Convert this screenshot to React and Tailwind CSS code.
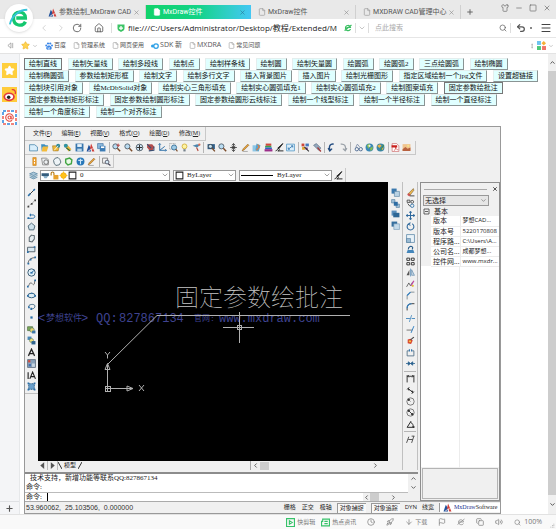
import React, { useState } from 'react';
import {
  X, Plus, Minus, Square, Shirt, ChevronLeft, ChevronRight, ChevronDown, ChevronUp, RotateCw, House,
  Search, Undo2, Menu, File, Rocket, ArrowDown, Flag, Volume2, Copy, Clock, Star, EllipsisVertical, AtSign,
} from 'lucide-react';

const BUTTON_ROWS = [
  ['绘制直线', '绘制矢量线', '绘制多段线', '绘制点', '绘制样条线', '绘制圆', '绘制矢量圆', '绘圆弧', '绘圆弧2', '三点绘圆弧', '绘制椭圆'],
  ['绘制椭圆弧', '参数绘制矩形框', '绘制文字', '绘制多行文字', '插入背景图片', '插入图片', '绘制光栅图形', '指定区域绘制一个jpg文件', '设置超链接'],
  ['绘制块引用对象', '绘McDbSolid对象', '绘制实心三角形填充', '绘制实心圆弧填充1', '绘制实心圆弧填充2', '绘制图案填充', '固定参数绘批注'],
  ['固定参数绘制矩形标注', '固定参数绘制圆形标注', '固定参数绘圆形云线标注', '绘制一个线型标注', '绘制一个半径标注', '绘制一个直径标注'],
  ['绘制一个角度标注', '绘制一个对齐标注'],
];

const MENUS = ['文件(F)', '编辑(E)', '视图(V)', '格式(O)', '绘图(D)', '修改(M)'];

const PROPERTIES = [
  ['版本', '梦想CAD...'],
  ['版本号', '5220170808'],
  ['程序路...', 'C:\\Users\\A...'],
  ['公司名...', '成都梦想...'],
  ['控件网...', 'www.mxdr...'],
];

const lens = (
  <>
    <circle cx="6" cy="6" r="4.5" fill="#b9dcf2" stroke="#55616b" strokeWidth="1.6" />
    <path d="M9.5 9.5l5 5" stroke="#7a4b2a" strokeWidth="2.6" />
  </>
);
const blue = '#2b6fa8';
const dark = '#333';

// 16x16 toolbar glyphs
const GLYPHS = {
  new: <path d="M1 3h9l5 4v7H1z" fill="#d9eefb" stroke="#4a86ac" strokeWidth="1.4" />,
  open: <><path d="M2 2h6l2 2h4v3H5L3 15z" fill="#3b8ec2" /><path d="M5 6h10l-3 9H3z" fill="#f3bb3c" /></>,
  openWeb: <><path d="M1 5h12l-2 9H2z" fill="#efb93b" stroke="#9c7420" /><circle cx="11" cy="5" r="3.5" fill="#2e8b9c" /><path d="M4 13l7-8" stroke="#fff" strokeWidth="1.5" /></>,
  saveWeb: <><path d="M1 3l6-1 8 9-5 4z" fill="#e8b43c" /><circle cx="5" cy="5" r="3.5" fill="#2f93a6" /><path d="M6 9l7 5" stroke="#2d6b35" strokeWidth="2" /></>,
  save: <><path d="M1 1h14v14H1z" fill="#3775ad" /><path d="M4 2h8v5H4z" fill="#e9f3fa" /><path d="M4 10h8v5H4z" fill="#b8d4e9" /></>,
  logo: <><path d="M1 15L5 3l3 5 1 7z" fill="#21529b" /><path d="M6 15l3-14 6 14h-4l-2-6z" fill="#d1403b" /><path d="M4 14l8-4" stroke="#fff" strokeWidth="1.3" /></>,
  saveAs: <><path d="M1 1h10v9H1z" fill="#8db9dc" stroke="#2d649a" /><path d="M5 5h10v10H5z" fill="#3c7cb5" /><path d="M7 6h6v3H7z" fill="#fff" /></>,
  zoomIn: <>{lens}<path d="M11 1v6M8 4h6" stroke="#b44" strokeWidth="1.6" /></>,
  zoom: lens,
  zoomAll: <><circle cx="8" cy="8" r="6" fill="#cfe5f4" stroke="#55616b" strokeWidth="1.6" /><path d="M8 3v10M3 8h10" stroke={dark} strokeWidth="1.8" fill="none" /></>,
  pan: <><path d="M2 2h9l4 5-3 6-5 1-5-6z" fill="#b34c4c" /><path d="M2 2l7 7M5 14l9-1v-7" stroke="#3b4f73" strokeWidth="2" fill="none" /></>,
  axis: <path d="M3 1v12h12M3 13l9-7M1 3l2-2 2 2M13 11l2 2-2 2" fill="none" stroke="#3171a9" strokeWidth="1.7" />,
  zoomWin: <><path d="M1 1h10v10H1z" fill="none" stroke="#888" strokeDasharray="2 1" /><circle cx="9" cy="8" r="4.5" fill="#9fcbe6" stroke="#2f6b95" strokeWidth="1.5" /><path d="M12 11l3 4" stroke="#7a4b2a" strokeWidth="2" /></>,
  bulb: <><circle cx="8" cy="6" r="4.3" fill="#fdf3a1" stroke="#cda522" strokeWidth="1.3" /><path d="M6 11h4v4H6z" fill="#76828c" /></>,
  brush: <><path d="M1 5l8-3 6 1-6 5z" fill="#4d87ae" /><path d="M8 8l3 6" stroke="#b2473a" strokeWidth="2" /><circle cx="13" cy="3" r="2" fill="#de6a52" /></>,
  zoomDark: <><path d="M1 2h13v9H1z" fill="#315f88" /><circle cx="6" cy="6" r="3.5" fill="#c7e3f3" stroke="#222" /><path d="M9 9l5 6" stroke="#7a4b2a" strokeWidth="2.4" /></>,
  move4: <path d="M8 1v14M2 8h12M5 4l3-3 3 3M5 12l3 3 3-3M6 5v6M10 5v6" fill="none" stroke={dark} strokeWidth="1.4" />,
  pencil: <><path d="M2 14l2-4 8-8 2 2-8 8z" fill="#e7a33a" stroke="#8a5b1d" /><path d="M3 15h9" stroke="#777" /></>,
  palette: <><path d="M1 4h10v11H1z" fill="#8cc6e6" /><path d="M8 1l7 3-3 11-6-2z" fill="#59a5cf" /><path d="M10 3l3 4-5 6" stroke="#e47b3c" strokeWidth="2" fill="none" /></>,
  colors: <><path d="M3 1h10v4H3z" fill="#d0483c" /><path d="M2 5h11v3H2z" fill="#3ca04d" /><path d="M2 8h12v3H2z" fill="#345fc0" /><path d="M1 11h14v4H1z" fill="#9c2e8a" /></>,
  pen: <><path d="M14 1L7 10l-2-1z" fill="#222" stroke="#222" strokeWidth="1.6" /><path d="M1 14c3 0 3-4 5-4l2 2c-1 2-3 2-3 2h10" stroke="#222" fill="none" strokeWidth="1.7" /></>,
  fit: <><path d="M1 2h14v12H1z" fill="#dbeefa" stroke="#5c9cc7" strokeWidth="1.5" /><path d="M4 11l8-6M9 5h3v3M4 8v3h3" stroke={blue} fill="none" strokeWidth="1.4" /></>,
  blocks: <><path d="M1 1h5v5H1z" fill="#cf4639" /><path d="M8 1h6v5H8z" fill="#4677bd" /><path d="M2 7h5v5H2z" fill="#e1a431" /><path d="M8 8h4v4H8z" fill="#7c3d95" /><path d="M6 7l8 8" stroke="#333" strokeWidth="2" /></>,
  search2: <><path d="M1 4l5-3 8 8-4 4z" fill="#93a8bd" stroke="#4c5e75" /><path d="M8 8l6 7" stroke="#a43b3b" strokeWidth="2.4" /></>,
  undo: <path d="M12 2C6 1 3 5 5 12M2 9l3 5 4-4" fill="none" stroke="#234c80" strokeWidth="2.5" />,
  redo: <path d="M3 2c7-1 10 4 8 10M7 10l4 4 3-5" fill="none" stroke="#9aa1a8" strokeWidth="2.2" />,
  find: <><circle cx="5" cy="11" r="3" fill="none" stroke="#405f8a" strokeWidth="1.5" /><circle cx="12" cy="11" r="3" fill="none" stroke="#405f8a" strokeWidth="1.5" /><path d="M3 8l3-6 4 5" stroke="#7a8ba5" fill="none" strokeWidth="1.5" /></>,
  globe: <><circle cx="8" cy="8" r="7" fill="#3a88b5" /><path d="M3 4l5-3 1 5-3 4zM9 9l5-3-1 6-3 2z" fill="#8bc04f" /><circle cx="8" cy="5" r="2" fill="#eee" /></>,
  globe2: <><circle cx="8" cy="8" r="7" fill="#3a86a8" /><path d="M2 5l5-3 3 3-4 4zM9 9l5-1-3 5z" fill="#e9b548" /><path d="M8 13l6-10" stroke="#3f8f52" strokeWidth="2" /></>,
  pdf: <><path d="M2 1h8l4 4v10H2z" fill="#fff" stroke="#c66" strokeWidth="1.2" /><path d="M1 4h10v4H1z" fill="#c8201c" /><path d="M5 14c3-2 4-5 3-7 0 4 3 5 5 5" stroke="#c8201c" fill="none" /></>,
  image: <><path d="M1 2h14v12H1z" fill="#f0c48e" /><path d="M1 11l5-4 4 3 5-2v6H1z" fill="#b8613f" /><circle cx="11" cy="5" r="2" fill="#f5e38a" /></>,
  door: <><path d="M5 1h6v14H5z" fill="#f0a12c" stroke="#c37a13" /><path d="M7 4h2v3H7zM7 9h2v3H7z" fill="#fff" /></>,
  copyShape: <><path d="M1 2h9l3 3v9H3z" fill="#eef1f3" stroke="#777" strokeWidth="1.3" /><circle cx="9" cy="9" r="4" fill="none" stroke="#666" strokeWidth="1.5" /></>,
  cloud: <path d="M4 2l5-1 3 3 2 5-3 5-6 1-3-4-1-5z" fill="#eef4f7" stroke="#48606b" strokeWidth="1.5" />,
  poly: <path d="M3 4l7-2 4 3-1 7-6 2-4-4z" fill="#eaf8e6" stroke="#42a544" strokeWidth="2.5" />,
  info: <><circle cx="8" cy="8" r="7" fill="#2777b8" /><path d="M8 3v10M4 6h8" stroke="#cde5f6" strokeWidth="2" /></>,
  zoomDoc: <><path d="M1 2h9v9H1z" fill="#f4f4f4" stroke="#666" strokeWidth="1.3" /><circle cx="9" cy="9" r="3.4" fill="#d6eaf6" stroke="#445" strokeWidth="1.4" /><path d="M11 12l4 3" stroke="#445" strokeWidth="2" /></>,
  layers: <path d="M1 5l7-3 7 3-7 3zM1 8l7 3 7-3M1 11l7 3 7-3" fill="#aac7d9" stroke="#5c88a5" strokeWidth="1.4" />,
  eye: <><path d="M1 4h13v5H1z" fill="#345d7e" /><path d="M4 9h9l-3 4H6z" fill="#8ab0c9" /></>,
  lock: <><path d="M2 8V4c0-3 5-3 5 0v3" stroke="#b57a16" strokeWidth="2" fill="none" /><path d="M6 7h9v8H6z" fill="#e7a12c" /></>,
  sun: <><circle cx="8" cy="8" r="5" fill="#ffc21a" stroke="#e99a00" /><path d="M8 1v14M1 8h14" stroke="#ffc21a" strokeWidth="2" /></>,
  box: <path d="M2 2h12v12H2z" fill="#fff" stroke="#222" strokeWidth="1.8" />,
  // drawing tools
  line: <><path d="M2 14L14 2" stroke={dark} strokeWidth="1.7" /><path d="M2 14l4-4M11 5l3-3" stroke={blue} strokeWidth="2.6" /></>,
  ray: <><path d="M1 14L14 3" stroke="#888" strokeWidth="1.3" strokeDasharray="4 1.5" /><path d="M1 12h3v3H1zM7 7h3v3H7zM13 1h3v3h-3z" fill="#444" /></>,
  pline: <><path d="M1 13h9c5 0 5-6 1-6H6" fill="none" stroke={blue} strokeWidth="1.7" /><path d="M1 11h3v3H1zM7 4l-3 3 3 3z" fill={blue} /></>,
  pentagon: <path d="M8 2l6 5-2 7H4L2 7z" fill="#cfe2ec" stroke="#44606f" strokeWidth="1.6" />,
  blob: <path d="M8 2l5 1v6l-4 5-5-1V6z" fill="#e6edf0" stroke="#5d6970" strokeWidth="1.8" />,
  rect: <><path d="M1 4h13v8H1z" fill="#d9e9f2" stroke="#46545e" strokeWidth="1.5" /><path d="M12 2h3v3h-3zM0 11h3v3H0z" fill={blue} /></>,
  arc: <><path d="M2 14C2 7 7 3 14 3" fill="none" stroke="#444" strokeWidth="1.5" /><path d="M1 12h3v3H1zM5 5h3v3H5zM13 1h3v3h-3z" fill={blue} /></>,
  circle: <><circle cx="8" cy="8" r="6.5" fill="#dfeff8" stroke="#36566e" strokeWidth="1.6" /><path d="M8 8l5-4" stroke={blue} strokeWidth="1.6" /><path d="M6 7h4v3H6z" fill={blue} /></>,
  spline: <><path d="M1 13c4 0 2-7 6-6s3 5 6 2l1-7" fill="none" stroke="#555" strokeWidth="1.4" /><path d="M0 12h3v3H0zM13 1h3v3h-3z" fill={blue} /></>,
  ellipse: <><ellipse cx="8" cy="8" rx="6.5" ry="4" fill="#dcecf5" stroke="#33607e" strokeWidth="1.7" /><path d="M0 7h3v3H0zM13 7h3v3h-3zM7 3h3v2H7z" fill={blue} /></>,
  ellipseArc: <><path d="M3 9C1 4 15 2 14 8c0 3-4 5-7 4" fill="none" stroke="#33607e" strokeWidth="1.7" /><path d="M6 10h3v4H6zM2 8h3v3H2z" fill={blue} /></>,
  point: <path d="M6 6h4v4H6z" fill={blue} />,
  insert: <><path d="M1 3h9v7H1z" fill="#7dab5b" stroke="#39592b" /><circle cx="9" cy="9" r="4" fill="#e6d76c" stroke="#466" /><path d="M9 10h6v5H9z" fill="#3d77a8" /></>,
  block: <><path d="M1 1h7v6H1z" fill="#4b87b5" /><circle cx="8" cy="8" r="3.6" fill="#efe07a" stroke="#575" /><path d="M8 9h7v6H8z" fill="#2f648f" /></>,
  textA: <path d="M2.500 14L8 2l5.500 12M4.500 10h7" fill="none" stroke="#222" strokeWidth="2.2" />,
  hatchImg: <><path d="M1 1h14v14H1z" fill="#8aa2ba" stroke="#345" /><path d="M2 2h4v4H2z" fill="#cf4a3c" /><path d="M9 8h5v6H9z" fill="#c9d6e2" /><path d="M3 9h4v4H3z" fill="#3f6db0" /></>,
  textIA: <path d="M2 2v12M5 14l5-12 5 12M7 10h6" fill="none" stroke="#222" strokeWidth="2" />,
  region: <><path d="M3 3h10v10H3z" fill="#6ba0cb" stroke="#275b88" strokeDasharray="2 1" strokeWidth="1.6" /><path d="M1 1h3v3H1zM12 1h3v3h-3zM1 12h3v3H1zM12 12h3v3h-3z" fill={blue} /></>,
  // draw order
  order1: <><path d="M1 1h9v9H1z" fill="#3a78ad" /><path d="M6 6h9v9H6z" fill="#b9d2e4" stroke="#4d7798" /></>,
  order2: <><path d="M1 1h6v6H1zM9 9h6v6H9z" fill="#9fbfd8" stroke="#4d7798" /><path d="M5 5h7v7H5z" fill="#2e6da3" /></>,
  order3: <><path d="M1 1h9v9H1z" fill="#5b8fbc" /><path d="M4 5h11v8H4z" fill="#2e6795" /></>,
  order4: <><path d="M1 1h10v9H1z" fill="#366f9e" /><path d="M5 5h10v10H5z" fill="#c6dbea" stroke="#6b93b3" /></>,
  // modify tools
  erase: <><path d="M13 1L4 10l3 3 7-9z" fill="#edb84b" stroke="#745a2f" /><path d="M2 12l3-3 3 3-2 3z" fill="#c95151" /><path d="M7 14h8" stroke="#333" strokeWidth="1.5" /></>,
  copy: <><path d="M2 2h5v4H2z" fill="#eee" stroke="#444" strokeWidth="1.5" /><circle cx="11" cy="5" r="2.5" fill="none" stroke="#444" strokeWidth="1.5" /><circle cx="11" cy="12" r="3" fill="none" stroke={blue} strokeWidth="1.5" /><path d="M3 8l4 5" stroke="#444" strokeWidth="1.6" /></>,
  move: <path d="M8 1v14M1 8h14M6 3l2-2 2 2M6 13l2 2 2-2M3 6L1 8l2 2M13 6l2 2-2 2" fill="none" stroke="#2f689c" strokeWidth="1.8" />,
  rotate: <path d="M5 3a6 6 0 1 0 6 0M8 1L4 4l4 2" fill="none" stroke="#2f689c" strokeWidth="1.9" />,
  scale: <><path d="M1 1h14v14H1z" fill="#e9f2f8" stroke="#6c93b0" strokeWidth="1.5" /><path d="M1 8h7v7H1z" fill="#9cbcd4" stroke="#4f7a9c" /></>,
  stretch: <><path d="M1 14h14l-2-5H3z" fill="#4486bb" /><path d="M4 8c0-5 6-8 8-3l-1 3" fill="none" stroke="#2b5f8c" strokeWidth="2" /></>,
  array: <path d="M1.500 2h5v4h-5zM9.500 2h5v4h-5zM1.500 10h5v4h-5zM9.500 10h5v4h-5z" fill="#fff" stroke="#333" strokeWidth="1.7" />,
  mirror: <><path d="M6 3v10H1z" fill="#555" /><path d="M10 3v10h5z" fill="#c8dae8" stroke="#4b799e" /><path d="M8 1v14" stroke={blue} /></>,
  sketch: <><path d="M1 14l4-7 3 5 4-7" stroke="#555" strokeWidth="1.5" fill="none" /><path d="M9 12l5-9" stroke="#c249a5" strokeWidth="2.2" /><circle cx="12" cy="12" r="2" fill="#e2c13a" /></>,
  chamfer: <><path d="M2 15V8l6-6h7" fill="none" stroke="#77828b" strokeWidth="1.5" /><path d="M2 8l6-6" stroke="#2f7ec0" strokeWidth="2" /></>,
  fillet: <><path d="M2 15v-4c0-5 3-8 8-8h5" fill="none" stroke="#333" strokeWidth="1.6" /><path d="M2 11c0-5 3-8 8-8" fill="none" stroke="#2f7ec0" strokeWidth="2" /></>,
  trim: <><path d="M0 8h7M10 8h6" stroke="#3f83ba" strokeWidth="1.6" /><path d="M10 2L6 14" stroke="#3f83ba" strokeWidth="1.4" /></>,
  extend: <><path d="M1 9h10" stroke="#666" strokeWidth="1.5" /><path d="M14 2L9 14" stroke="#2f7ec0" strokeWidth="1.7" /></>,
  explode: <><path d="M3 6l5-1 4 3-3 6-6-1z" fill="#d8432f" /><path d="M8 7l6-5" stroke="#444" strokeWidth="2" /><path d="M5 8h4v3H5z" fill="#f4c53c" /></>,
  breakAt: <><path d="M5 5H2v9h12V5h-3" fill="none" stroke="#4d6c84" strokeWidth="1.5" /><path d="M5 2h2v4H5zM9 2h2v4H9z" fill={blue} /></>,
  join: <path d="M0 8h6M10 8h6M4 5l4 3-4 3zM12 5L8 8l4 3z" fill="#285f8e" stroke="#285f8e" strokeWidth="1.4" />,
  dimLine: <path d="M2 2v13M14 2v13M2 4h12M5 2L3 4l2 2M11 2l2 2-2 2" fill="none" stroke="#333" strokeWidth="1.7" />,
  dimAlign: <path d="M4 4l8 8M2 6l4-4M10 14l4-4M4 4v3h3zM12 12V9H9z" fill="#333" stroke="#333" strokeWidth="1.6" />,
  dimRadius: <><circle cx="8" cy="8" r="6.5" fill="none" stroke="#555" strokeWidth="1.3" /><path d="M8 8L4 4M4 4v3l3-3z" fill="#222" stroke="#222" /></>,
  dimDia: <><circle cx="8" cy="8" r="6.5" fill="none" stroke="#555" strokeWidth="1.3" /><path d="M4 4l8 8" stroke="#222" strokeWidth="1.5" /><path d="M4 4v3l3-3zM12 12V9l-3 3z" fill="#222" stroke="#222" /></>,
  dimAngle: <path d="M9 2L2 13h13M8 4c4 2 5 5 5 9M12 11l1 2 2-1" fill="none" stroke="#222" strokeWidth="1.7" />,
  dimEdit: <path d="M1 14L5 3M10 14l4-12M4 8h8M10 2h5" fill="none" stroke="#444" strokeWidth="1.6" />,
  prev: <path d="M11 2L4 8l7 6z" fill="#555" />,
  next: <path d="M5 2l7 6-7 6z" fill="#555" />,
};

const TOOLBAR = [
  'new', 'open', 'openWeb', 'saveWeb', 'save', 'logo', 'saveAs', '|',
  'zoomIn', 'zoom', 'zoomAll', 'pan', 'axis', 'zoomWin', 'bulb', 'brush', '|',
  'zoomDark', 'zoom', 'move4', 'pencil', 'palette', 'colors', 'pen', 'fit', '|',
  'blocks', 'search2', '|', 'undo', 'redo', '|', 'find', 'globe', 'globe2', '|', 'pdf', 'image',
];
const SUB_TOOLBAR = ['door', 'copyShape', 'cloud', 'poly', 'info', 'pencil', '|', 'zoomDoc'];
const DRAW_TOOLS = [
  'line', 'ray', 'pline', 'pentagon', 'blob', 'rect', 'arc', 'circle', 'spline',
  'ellipse', 'ellipseArc', 'point', 'insert', 'block', 'textA', 'hatchImg', 'textIA', 'region',
];
const ORDER_TOOLS = ['order1', 'order2', 'order3', 'order4'];
const MODIFY_TOOLS = [
  'erase', 'copy', 'move', 'rotate', 'scale', 'stretch', 'array', 'mirror', 'sketch', 'chamfer', 'fillet',
  'trim', 'extend', 'explode', 'breakAt', 'join', '-', 'dimLine', 'dimAlign', 'dimRadius', 'dimDia', 'dimAngle', '-', 'dimEdit',
];

const Glyph = ({ name }) => (
  <svg viewBox="0 0 16 16" className="h-[9px] w-[9px] shrink-0" aria-hidden="true">{GLYPHS[name]}</svg>
);

const Tools = ({ items }) =>
  items.map((name, i) => {
    if (name === '|') return <span key={i} className="h-[11px] w-px bg-[#b5b5b5]" />;
    if (name === '-') return <span key={i} className="h-px w-[12px] bg-[#b5b5b5]" />;
    return (
      <button key={i} type="button" aria-label={name} className="flex">
        <Glyph name={name} />
      </button>
    );
  });

const BrowserTab = ({ title, active, logo }) => (
  <div
    className={`flex h-[14px] w-[105px] items-center pl-[7px] pr-[5px] ${
      active ? 'bg-gradient-to-r from-[#12d36b] via-[#13d387] to-[#43c7f4] text-white' : 'border-r border-[#d0d0d0] text-[#555]'
    }`}
  >
    {logo ? <Glyph name="logo" /> : <File className={`h-[8px] w-[8px] ${active ? 'fill-white' : 'text-[#999]'}`} />}
    <button type="button" className="ml-[2px] flex-1 text-left whitespace-nowrap">{title}</button>
    <button type="button" aria-label="关闭" className={active ? 'text-[#28739a]' : 'text-[#888]'}>
      <X className="h-[7px] w-[7px]" />
    </button>
  </div>
);

const TitleBar = () => (
  <div className="flex h-[19px] items-end bg-[#e9e9e9] pl-[41px] font-['Roboto','Noto_Sans_CJK_SC',sans-serif] text-[7px] leading-[14px]">
    <BrowserTab title="参数绘制_MxDraw CAD" logo />
    <BrowserTab title="MxDraw控件" active />
    <BrowserTab title="MxDraw控件" />
    <BrowserTab title="MXDRAW CAD管理中心" />
    <button type="button" aria-label="新标签" className="mb-[3px] ml-[5px] text-[#666]"><Plus className="h-[8px] w-[8px]" strokeWidth={3} /></button>
    <div className="mb-[7px] ml-auto flex gap-[6px] pr-[5px] text-[#666]">
      <button type="button" aria-label="皮肤"><Shirt className="h-[8px] w-[8px]" /></button>
      <button type="button" aria-label="最小化"><Minus className="h-[8px] w-[8px]" /></button>
      <button type="button" aria-label="最大化"><Square className="h-[8px] w-[8px]" /></button>
      <button type="button" aria-label="关闭窗口"><X className="h-[8px] w-[8px]" /></button>
    </div>
  </div>
);

const AddressBar = () => (
  <div className="flex h-[19px] items-center border-b border-[#e6e6e6] bg-white pl-[39px] pr-[4px]">
    <button type="button" aria-label="后退" className="text-[#ccc]"><ChevronLeft className="h-[10px] w-[10px]" /></button>
    <button type="button" aria-label="前进" className="ml-[7px] text-[#ccc]"><ChevronRight className="h-[10px] w-[10px]" /></button>
    <button type="button" aria-label="刷新" className="ml-[6px] text-[#555]"><RotateCw className="h-[10px] w-[10px]" /></button>
    <button type="button" aria-label="主页" className="ml-[12px] text-[#555]"><House className="h-[10px] w-[10px]" /></button>
    <span className="ml-[7px] h-[10px] w-px bg-[#ddd]" />
    <svg viewBox="0 0 16 16" className="ml-[5px] h-[8px] w-[8px]" aria-hidden="true">
      <path d="M1 1h14v8c0 4-4 5-7 7-3-2-7-3-7-7z" fill="#3cc466" />
      <path d="M8 4v8M4 8h8" stroke="#fff" strokeWidth="2.5" />
    </svg>
    <input
      aria-label="地址"
      className="ml-[3px] w-[216px] bg-transparent text-[8px] text-[#222] outline-none"
      defaultValue="file:///C:/Users/Administrator/Desktop/教程/Extended/M"
    />
    <svg viewBox="0 0 16 16" className="h-[8px] w-[8px]" aria-hidden="true">
      <path d="M13 10c-2 5-10 4-10-2s9-7 10-1H5M1 13L15 2" fill="none" stroke="#3bbf63" strokeWidth="2.4" />
    </svg>
    <span className="ml-[3px] h-[10px] w-px bg-[#ddd]" />
    <ChevronDown className="ml-[2px] h-[8px] w-[8px] text-[#aaa]" />
    <span className="ml-[2px] h-[10px] w-px bg-[#ddd]" />
    <input aria-label="搜索" placeholder="点此搜索" className="ml-[6px] min-w-0 flex-1 text-[7px] outline-none placeholder:text-[#aaa]" />
    <button type="button" aria-label="查找" className="text-[#555]"><Search className="h-[8px] w-[8px]" /></button>
    <span className="ml-[3px] h-[10px] w-px bg-[#ddd]" />
    <button type="button" aria-label="恢复" className="ml-[5px] flex items-center gap-[4px] text-[#555]">
      <Undo2 className="h-[10px] w-[10px]" strokeWidth={3} />
      <span className="h-[2px] w-[2px] bg-[#888]" />
    </button>
    <button type="button" aria-label="菜单" className="ml-[8px] text-[#444]"><Menu className="h-[12px] w-[12px]" /></button>
  </div>
);

const Bookmark = ({ label, latin, children }) => (
  <a href="#" className={`flex items-center gap-[1px] whitespace-nowrap ${latin ? 'text-[7px]' : 'text-[6px]'}`}>
    {children || <File className="h-[7px] w-[7px] text-[#999]" />}
    {label}
  </a>
);

const BookmarkBar = () => (
  <div className="flex h-[16px] items-center gap-[7px] border-b border-[#e3e3e3] bg-white pl-[7px] pr-[2px] text-[#555]">
    <svg viewBox="0 0 16 16" className="h-[7px] w-[7px]" aria-hidden="true">
      <path d="M9 2L2 8l7 6zM13 2v12" fill="none" stroke="#888" strokeWidth="1.5" />
    </svg>
    <span className="flex items-center gap-[2px]">
      <Star className="h-[9px] w-[9px] fill-[#ffd34f] text-[#f0b93a]" />
      <ChevronDown className="h-[6px] w-[6px] text-[#999]" />
    </span>
    <Bookmark label="百度">
      <svg viewBox="0 0 16 16" className="h-[8px] w-[8px]" aria-hidden="true">
        <path d="M8 7c3 0 7 4 5 7-1 2-3 1-5 1s-4 1-5-1c-2-3 2-7 5-7z" fill="#3b87e8" />
        <circle cx="2.500" cy="7" r="2" fill="#3b87e8" /><circle cx="6" cy="3" r="2.200" fill="#3b87e8" />
        <circle cx="10.500" cy="3" r="2.200" fill="#3b87e8" /><circle cx="14" cy="7" r="2" fill="#3b87e8" />
        <path d="M6 10v3h3v-3" stroke="#fff" fill="none" />
      </svg>
    </Bookmark>
    <Bookmark label="管理系统" />
    <Bookmark label="网页使用" />
    <Bookmark label="SDK 新" latin>
      <svg viewBox="0 0 16 16" className="h-[8px] w-[8px]" aria-hidden="true">
        <circle cx="10" cy="8" r="4.5" fill="none" stroke="#2ea0e6" strokeWidth="2.500" /><circle cx="3" cy="8" r="3" fill="#2ea0e6" />
      </svg>
    </Bookmark>
    <Bookmark label="MXDRA" latin />
    <Bookmark label="常见问题" />
    <div className="ml-auto flex items-center gap-[2px]">
      <EllipsisVertical className="h-[8px] w-[6px] text-[#888]" />
      <svg viewBox="0 0 16 16" className="h-[9px] w-[9px]" aria-hidden="true">
        <path d="M0 0h7v7H0z" fill="#6ec3f0" /><path d="M12 0l4 4-4 4-4-4z" fill="#f6b036" />
        <path d="M0 9h7v7H0z" fill="#4cc878" /><path d="M9 9h7v7H9z" fill="#ef7468" />
      </svg>
      <ChevronDown className="h-[6px] w-[6px] text-[#999]" />
    </div>
  </div>
);

const SideBar = () => (
  <aside className="flex w-[20px] shrink-0 flex-col items-center border-r border-[#e6e8ea] bg-[#f4f5f7] pt-[9px]">
    <button type="button" aria-label="收藏" className="flex h-[15px] w-[15px] items-center justify-center bg-[#ffcf3d]">
      <Star className="h-[11px] w-[11px] fill-white text-white" />
    </button>
    <button type="button" aria-label="微博" className="mt-[9px] flex h-[15px] w-[15px] items-center justify-center bg-[#ffcb3b]">
      <svg viewBox="0 0 16 16" className="h-[14px] w-[14px]" aria-hidden="true">
        <ellipse cx="7" cy="10" rx="6.500" ry="5" fill="#e2383f" />
        <ellipse cx="7" cy="10" rx="4.500" ry="3.200" fill="#fff" />
        <circle cx="6.500" cy="10.500" r="2" fill="#222" />
        <path d="M10 2c3-1 5 2 4 5" fill="none" stroke="#e2383f" strokeWidth="1.500" />
      </svg>
    </button>
    <button type="button" aria-label="邮箱" className="mt-[8px] flex h-[15px] w-[15px] items-center justify-center bg-white text-[#e5554a]">
      <svg viewBox="0 0 15 15" className="h-[15px] w-[15px]" aria-hidden="true">
        <path d="M1 1h13v13H1z" fill="none" stroke="#5fa4e6" strokeWidth="2" strokeDasharray="3 5" />
        <path d="M1 1h13v13H1z" fill="none" stroke="#f0837b" strokeWidth="2" strokeDasharray="3 5" strokeDashoffset="4" />
        <AtSign x="3" y="3" width="9" height="9" strokeWidth={3} />
      </svg>
    </button>
    <button type="button" aria-label="添加" className="mt-auto flex h-[13px] w-full items-center justify-center border-t border-[#dfe1e4] text-[#555]">
      <Plus className="h-[9px] w-[9px]" strokeWidth={3} />
    </button>
  </aside>
);

const ActionButtons = ({ active, onSelect }) => (
  <div className="font-['Liberation_Serif','Noto_Sans_CJK_SC',serif] text-[14px] leading-[12px]">
    {BUTTON_ROWS.map((row) => (
      <div key={row[0]} className="h-[12px] whitespace-nowrap">
        {row.map((label) => (
          <React.Fragment key={label}>
            <button
              type="button"
              onClick={() => onSelect(label)}
              className={`mr-[2px] h-[12px] border bg-[#e0ffff] px-[4px] align-top text-[7px] leading-[9px] text-[#111] ${
                active === label || label === '绘制直线'
                  ? 'border-[#777]'
                  : 'border-t-[#e4eeee] border-l-[#e4eeee] border-r-[#8a9494] border-b-[#8a9494]'
              }`}
            >
              {label}
            </button>{' '}
          </React.Fragment>
        ))}
      </div>
    ))}
  </div>
);

const DrawingCanvas = () => (
  <svg className="block h-[279px] w-full bg-black" role="img" aria-label="绘图区">
    <g fill="#3f4390" className="font-['Liberation_Mono','Noto_Sans_CJK_SC',monospace] text-[12px]">
      <text x="0" y="140">&lt;</text>
      <text x="8" y="139" className="text-[9px]">梦想软件</text>
      <text x="43" y="140">&gt;</text>
      <text x="58" y="140">QQ:</text>
      <text x="81" y="140">827867134</text>
      <text x="156" y="139" className="text-[8px]">官网:</text>
      <text x="181" y="140">www.mxdraw.com</text>
    </g>
    <text x="137" y="124" fill="#c4c4c4" className="font-['Noto_Sans_CJK_SC',sans-serif] text-[24px] font-thin">固定参数绘批注</text>
    <g fill="none" stroke="#b0b0b0" shapeRendering="crispEdges">
      <path d="M119 133.500H312" />
      <path d="M185 145.500h31M201.500 130v31M199 143h4v4h-4z" />
      <path d="M67 204h5v5h-5zM69.500 182v27M67 206.500h28" />
    </g>
    <g fill="none" stroke="#b0b0b0">
      <path d="M119 133.500L70 182" />
      <path d="M67 187.500l2.500-6 2.500 6zM89 204l6 2.500-6 2.500z" />
      <path d="M101 203l5 6M106 203l-5 6M67 170l2.500 3 2.500-3M69.500 173v3.500" />
    </g>
  </svg>
);

const CommandArea = () => (
  <div className="flex h-[29px] border-t-2 border-[#8c8c8c] bg-white font-['Liberation_Serif','Noto_Sans_CJK_SC',serif] text-[7px] leading-[9px] text-[#222]">
    <div className="min-w-0 flex-1">
      <p className="pl-[5px]">技术支持，新增功能等联系QQ:827867134</p>
      <p className="border-b border-[#bbb] pl-[1px]">命令:</p>
      <div className="flex pl-[1px]">
        <label htmlFor="command">命令:</label>
        <input id="command" className="ml-[5px] h-[8px] min-w-0 flex-1 border-l border-black outline-none" />
        <div className="flex h-[8px] w-[45px] items-center bg-[#f0f0f0] pr-[11px] text-[#555]">
          <ChevronLeft className="h-[7px] w-[7px]" strokeWidth={3} />
          <span className="h-[8px] w-[9px] bg-[#cdcdcd]" />
          <ChevronRight className="ml-auto h-[7px] w-[7px]" strokeWidth={3} />
        </div>
      </div>
    </div>
    <div className="flex w-[10px] flex-col items-center bg-[#f0f0f0] pt-px text-[#555]">
      <ChevronUp className="h-[7px] w-[7px]" strokeWidth={3} />
      <ChevronDown className="mt-[2px] h-[7px] w-[7px]" strokeWidth={3} />
    </div>
  </div>
);

const PropertiesPanel = () => (
  <aside className="ml-[2px] flex w-[80px] shrink-0 flex-col border border-[#8e8e8e] bg-[#f0f0f0] text-[7px] text-[#222]">
    <div className="flex h-[12px] items-center gap-[5px] pl-[3px] pr-px">
      <span className="h-px flex-1 bg-[#aaa]" />
      <button type="button" aria-label="关闭面板"><X className="h-[6px] w-[6px]" strokeWidth={3} /></button>
    </div>
    <div className="relative ml-[2px] w-[66px]">
      <select aria-label="选择对象" className="block h-[11px] w-full appearance-none border border-[#999] bg-[#e6e6e6] pl-[1px] text-[7px] leading-[9px]">
        <option>无选择</option>
      </select>
      <ChevronDown className="pointer-events-none absolute top-[2px] right-[2px] h-[7px] w-[7px] text-[#666]" />
    </div>
    <div className="flex-1 bg-white">
      <table className="w-full table-fixed border-collapse leading-[9px] whitespace-nowrap">
        <colgroup>
          <col className="w-[10px]" />
          <col className="w-[29px]" />
          <col />
        </colgroup>
        <tbody>
          <tr className="h-[10px] bg-[#f0f0f0]">
            <td className="p-0">
              <svg viewBox="0 0 14 14" className="ml-[2px] h-[7px] w-[7px]" aria-hidden="true">
                <path d="M2 2h10v10H2zM4 7h6" fill="none" stroke="#333" strokeWidth="1.500" />
              </svg>
            </td>
            <td colSpan={2} className="p-0 pl-[3px]">基本</td>
          </tr>
          {PROPERTIES.map(([name, value]) => (
            <tr key={name} className="h-[10px]">
              <td className="bg-[#f0f0f0] p-0" />
              <td className="border-r border-b border-[#ececec] p-0 pl-[2px]">{name}</td>
              <td className="border-b border-[#ececec] p-0 pl-[2px] text-[6px]">{value}</td>
            </tr>
          ))}
        </tbody>
      </table>
      <div className="ml-[10px] h-full max-h-[202px] w-[29px] border-r border-[#ececec]" />
    </div>
    <div className="m-px h-[31px] border border-[#b4b4b4]" />
  </aside>
);

const StatusBar = () => (
  <div className="flex h-[12px] items-center border-t border-[#aaa] pl-[1px] text-[6px] leading-[9px] text-[#222]">
    <span className="font-['Liberation_Sans',sans-serif] text-[7px] whitespace-pre text-[#333]">53.960062,  25.103506,  0.000000</span>
    <div className="ml-auto flex items-center gap-[5px]">
      <button type="button">栅格</button>
      <button type="button" className="ml-[1px]">正交</button>
      <button type="button" className="ml-[1px]">极轴</button>
      <button type="button" className="border-t border-l border-[#999] bg-[#f8f8f8] px-[2px]">对象捕捉</button>
      <button type="button" className="border-t border-l border-[#999] bg-[#f8f8f8] px-[2px]">对象追踪</button>
      <button type="button">DYN</button>
      <button type="button">线宽</button>
      <span className="flex w-[61px] items-center gap-[2px] border-l border-[#999] bg-white pl-[3px] font-['Liberation_Serif',serif]">
        <Glyph name="logo" />
        <span><span className="text-[#23328f]">MxDraw</span>Software</span>
      </span>
    </div>
  </div>
);

const CadWindow = () => (
  <section className="mr-[47px] mt-[8px] border border-[#999] bg-[#f0f0f0]">
    <nav className="flex h-[14px] w-[181px] items-center justify-between border-r border-b border-[#c8c8c8] pl-[8px] pr-[5px] text-[6px] text-[#222]">
      {MENUS.map((menu) => (
        <button key={menu} type="button">
          {menu.slice(0, 3)}<u>{menu[3]}</u>{menu[4]}
        </button>
      ))}
    </nav>
    <div className="flex h-[14px] w-[391px] items-center justify-between border-r border-b border-[#c8c8c8] pl-[4px] pr-[3px]">
      <Tools items={TOOLBAR} />
    </div>
    <div className="flex h-[13px] w-[89px] items-center justify-between border-r border-b border-[#c8c8c8] pl-[5px] pr-[2px]">
      <Tools items={SUB_TOOLBAR} />
    </div>
    <div className="flex h-[14px] w-[321px] items-center gap-[2px] border-r border-[#c8c8c8] pl-[4px] font-['Liberation_Serif',serif] text-[7px] text-[#222]">
      <Glyph name="layers" />
      <button type="button" className="flex h-[11px] w-[130px] items-center border border-[#999] bg-white">
        <Glyph name="eye" />
        <Glyph name="lock" />
        <Glyph name="sun" />
        <Glyph name="box" />
        <span className="ml-[3px] flex-1 text-left">0</span>
        <ChevronDown className="h-[8px] w-[8px] text-[#777]" />
      </button>
      <button type="button" className="ml-px flex h-[11px] w-[63px] items-center border border-[#999] bg-white pl-[1px]">
        <Glyph name="box" />
        <span className="ml-[3px] flex-1 text-left">ByLayer</span>
        <ChevronDown className="h-[8px] w-[8px] text-[#777]" />
      </button>
      <button type="button" className="ml-px flex h-[11px] w-[93px] items-center border border-[#999] bg-white pl-[1px]">
        <span className="h-px w-[32px] bg-black" />
        <span className="ml-[4px] flex-1 text-left">ByLayer</span>
        <ChevronDown className="h-[8px] w-[8px] text-[#777]" />
      </button>
      <button type="button" aria-label="线型"><Glyph name="pen" /></button>
    </div>

    <div className="flex">
      <div className="min-w-0 flex-1">
        <div className="flex pb-[2px]">
          <div className="w-[13px] shrink-0">
            <div className="flex h-[212px] flex-col items-center justify-between border-b border-[#c0c0c0] pt-[6px] pb-[2px]">
              <Tools items={DRAW_TOOLS} />
            </div>
          </div>
          <div className="min-w-0 flex-1">
            <DrawingCanvas />
            <div className="flex h-[9px] items-center text-[6px] leading-[9px] text-[#222]">
              <button type="button" aria-label="上一页" className="border-r border-[#bbb]"><Glyph name="prev" /></button>
              <button type="button" aria-label="下一页" className="border-r border-[#bbb]"><Glyph name="next" /></button>
              <svg viewBox="0 0 4 9" className="h-[9px] w-[4px]" aria-hidden="true">
                <path d="M0 1l4 7" stroke="#333" />
              </svg>
              <button type="button" className="px-[2px]">模型</button>
              <svg viewBox="0 0 4 9" className="h-[9px] w-[4px]" aria-hidden="true">
                <path d="M4 1L0 8" stroke="#333" />
              </svg>
              <div className="ml-auto flex h-full w-[138px] items-center border-l border-[#aaa] pr-[9px] text-[#555]">
                <ChevronLeft className="mx-[1px] h-[7px] w-[7px]" strokeWidth={3} />
                <span className="h-[8px] w-[9px] bg-[#cdcdcd]" />
                <ChevronRight className="ml-auto h-[7px] w-[7px]" strokeWidth={3} />
              </div>
            </div>
          </div>
          <div className="flex w-[15px] shrink-0 flex-col items-center gap-[2px] border-r border-[#c0c0c0] pt-[6px]">
            <Tools items={ORDER_TOOLS} />
          </div>
          <div className="w-[15px] shrink-0 border-r border-[#c0c0c0]">
            <div className="flex h-[262px] flex-col items-center justify-between pt-[6px]">
              <Tools items={MODIFY_TOOLS} />
            </div>
          </div>
        </div>
        <CommandArea />
      </div>
      <PropertiesPanel />
    </div>
    <StatusBar />
  </section>
);

const PageScrollbar = () => (
  <div className="flex w-[8px] shrink-0 flex-col items-center bg-[#f0f0f0] text-[#444]">
    <ChevronUp className="my-[5px] h-[7px] w-[7px]" strokeWidth={3} />
    <span className="w-full flex-1 bg-[#cdcdcd]" />
    <ChevronDown className="my-[6px] h-[7px] w-[7px]" strokeWidth={3} />
  </div>
);

const BrowserFooter = () => (
  <footer className="flex h-[15px] shrink-0 items-center justify-end gap-[11px] border-t border-[#e2e2e2] bg-[#f9f9f9] pr-[1px] text-[6px] text-[#777]">
    <button type="button" className="-mr-[5px] flex items-center gap-[2px]">
      <svg viewBox="0 0 16 16" className="h-[9px] w-[9px]" aria-hidden="true">
        <path d="M1 1h14v14H1zM6 5l5 3-5 3z" fill="none" stroke="#37c26a" strokeWidth="2" />
      </svg>
      快剪辑
    </button>
    <button type="button" className="flex items-center gap-[2px]">
      <svg viewBox="0 0 16 16" className="h-[9px] w-[9px]" aria-hidden="true">
        <path d="M3 2h12v12H1V6h2zM6 6h6M6 10h6" fill="none" stroke="#37c26a" strokeWidth="2" />
      </svg>
      热点资讯
    </button>
    <button type="button" aria-label="历史"><Clock className="h-[8px] w-[8px]" /></button>
    <button type="button" aria-label="加速"><Rocket className="h-[8px] w-[8px]" /></button>
    <button type="button" className="flex items-center gap-[2px]"><ArrowDown className="h-[8px] w-[8px]" />下载</button>
    <button type="button" aria-label="标记"><Flag className="h-[8px] w-[8px]" /></button>
    <button type="button" aria-label="内核">
      <svg viewBox="0 0 16 16" className="h-[8px] w-[8px]" aria-hidden="true">
        <path d="M13 11c-2 4-10 3-10-3s9-6 10 0H4M1 13L15 2" fill="none" stroke="#888" strokeWidth="1.500" />
      </svg>
    </button>
    <button type="button" aria-label="窗口"><Copy className="h-[8px] w-[8px]" /></button>
    <button type="button" aria-label="声音"><Volume2 className="h-[8px] w-[8px]" /></button>
    <button type="button" className="flex items-center gap-[3px] text-[7px]"><Search className="h-[7px] w-[7px]" />100%</button>
    <svg viewBox="0 0 8 8" className="-ml-[4px] h-[6px] w-[6px] self-end" aria-hidden="true">
      <path d="M6 1h1v1H6zM4 3h1v1H4zM6 3h1v1H6zM2 5h1v1H2zM4 5h1v1H4zM6 5h1v1H6z" fill="#999" />
    </svg>
  </footer>
);

export default function App() {
  const [active, setActive] = useState('固定参数绘批注');

  return (
    <div className="relative flex min-h-screen flex-col bg-white font-['Open_Sans','Noto_Sans_CJK_SC',sans-serif]">
      <TitleBar />
      <AddressBar />
      <BookmarkBar />
      {/* Browser logo over the tab strip */}
      <div className="absolute top-[4px] left-[5px] flex h-[28px] w-[28px] items-center justify-center rounded-full bg-white shadow-sm">
        <svg viewBox="0 0 24 24" className="h-[22px] w-[22px]" aria-hidden="true">
          <path d="M19 16c-3 6-13 5-13-4 0-8 13-9 13 0H9" fill="none" stroke="#14c76f" strokeWidth="3.600" />
          <path d="M2 19C4 10 12 3 21 3" fill="none" stroke="#35c3da" strokeWidth="2" />
        </svg>
      </div>
      <div className="flex flex-1">
        <SideBar />
        <main className="min-w-0 flex-1 pt-[4px] pl-[4px]">
          <ActionButtons active={active} onSelect={setActive} />
          <CadWindow />
        </main>
        <PageScrollbar />
      </div>
      <BrowserFooter />
    </div>
  );
}
